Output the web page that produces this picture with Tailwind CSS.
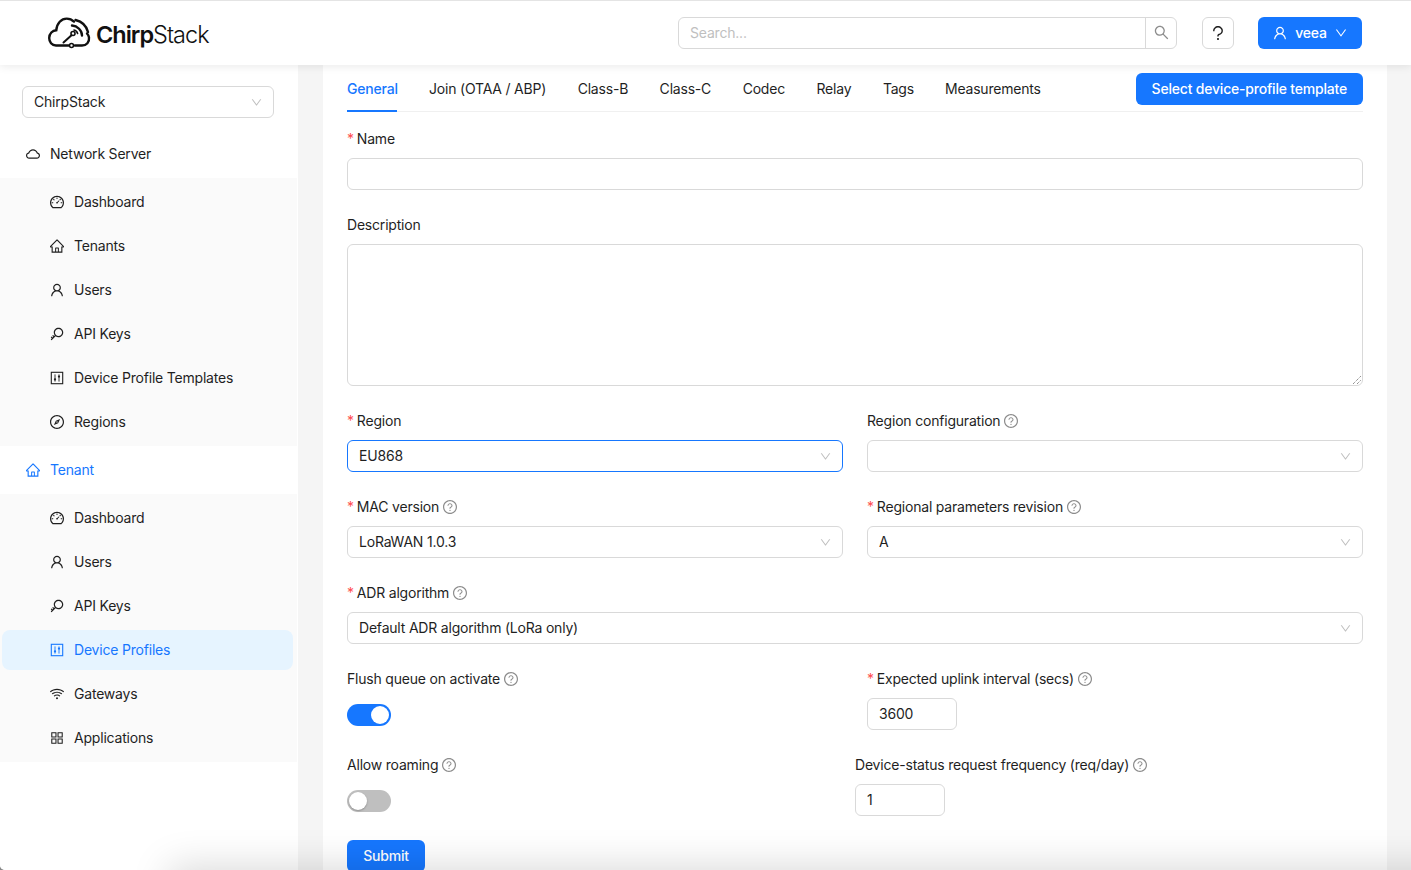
<!doctype html>
<html>
<head>
<meta charset="utf-8">
<script src="https://cdn.jsdelivr.net/npm/@tailwindcss/browser@4"></script>
<title>ChirpStack</title>
</head>
<body class="m-0 bg-[#888]">
<svg class="hidden" xmlns="http://www.w3.org/2000/svg">
<defs>
<symbol id="cloud" viewBox="64 64 896 896"><path fill="currentColor" d="M811.4 418.7C765.6 297.9 648.9 212 512.2 212S258.8 297.8 213 418.6C127.3 441.1 64 519.1 64 612c0 110.5 89.5 200 199.9 200h496.2C870.5 812 960 722.5 960 612c0-92.7-63.1-170.7-148.6-193.3zm36.3 281a123.07 123.07 0 0 1-87.6 36.3H263.9c-33.1 0-64.2-12.9-87.6-36.3A123.3 123.3 0 0 1 140 612c0-28 9.1-54.3 26.2-76.3a125.7 125.7 0 0 1 66.1-43.7l37.9-9.9 13.9-36.6c8.6-22.8 20.6-44.1 35.7-63.4a245.6 245.6 0 0 1 52.4-49.9c41.1-28.9 89.5-44.2 140-44.2s98.9 15.3 140 44.2c19.9 14 37.5 30.8 52.4 49.9 15.1 19.3 27.1 40.7 35.7 63.4l13.8 36.5 37.8 10c54.3 14.5 92.1 63.8 92.1 120 0 33.1-12.9 64.3-36.3 87.7z"/></symbol>
<symbol id="home" viewBox="64 64 896 896"><path fill="currentColor" d="M946.5 505L560.1 118.8l-25.9-25.9a31.5 31.5 0 0 0-44.4 0L77.5 505a63.9 63.9 0 0 0-18.8 46c.4 35.2 29.7 63.3 64.9 63.3h42.5V940h691.8V614.3h43.4c17.1 0 33.2-6.7 45.3-18.8a63.6 63.6 0 0 0 18.7-45.3c0-17-6.7-33.1-18.8-45.2zM568 868H456V664h112v204zm217.9-325.7V868H632V640c0-22.1-17.9-40-40-40H432c-22.1 0-40 17.9-40 40v228H238.1V542.3h-96l370-369.7 23.1 23.1L882 542.3h-96.1z"/></symbol>
<symbol id="user" viewBox="64 64 896 896"><path fill="currentColor" d="M858.5 763.6a374 374 0 0 0-80.6-119.5 375.63 375.63 0 0 0-119.5-80.6c-.4-.2-.8-.3-1.2-.5C719.5 518 760 444.7 760 362c0-137-111-248-248-248S264 225 264 362c0 82.7 40.5 156 102.8 201.1-.4.2-.8.3-1.2.5-44.8 18.9-85 46-119.5 80.6a375.63 375.63 0 0 0-80.6 119.5A371.7 371.7 0 0 0 136 901.8a8 8 0 0 0 8 8.2h60c4.4 0 7.9-3.5 8-7.8 2-77.2 33-149.5 87.8-204.3 56.7-56.7 132-87.9 212.2-87.9s155.5 31.2 212.2 87.9C779 752.7 810 825 812 902.2c.1 4.4 3.6 7.8 8 7.8h60a8 8 0 0 0 8-8.2c-1-47.8-10.9-94.3-29.5-138.2zM512 534c-45.9 0-89.1-17.9-121.6-50.4S340 407.9 340 362c0-45.9 17.9-89.1 50.4-121.6S466.1 190 512 190s89.1 17.9 121.6 50.4S684 316.1 684 362c0 45.9-17.9 89.1-50.4 121.6S557.9 534 512 534z"/></symbol>
<symbol id="down" viewBox="64 64 896 896"><path fill="currentColor" d="M884 256h-75c-5.1 0-9.9 2.5-12.9 6.6L512 654.2 227.9 262.6c-3-4.1-7.8-6.6-12.9-6.6h-75c-6.5 0-10.3 7.4-6.5 12.7l352.6 486.1c12.8 17.6 39 17.6 51.7 0l352.6-486.1c3.9-5.3.1-12.7-6.4-12.7z"/></symbol>
<symbol id="search" viewBox="64 64 896 896"><path fill="currentColor" d="M909.6 854.5L649.9 594.8C690.2 542.7 712 479 712 412c0-80.2-31.3-155.4-87.9-212.1-56.6-56.7-132-87.9-212.1-87.9s-155.5 31.3-212.1 87.9C143.2 256.5 112 331.8 112 412c0 80.1 31.3 155.5 87.9 212.1C256.5 680.8 331.8 712 412 712c67 0 130.6-21.8 182.7-62l259.7 259.6a8.2 8.2 0 0 0 11.6 0l43.6-43.5a8.2 8.2 0 0 0 0-11.6zM570.4 570.4C528 612.7 471.8 636 412 636s-116-23.3-158.4-65.6C211.3 528 188 471.8 188 412s23.3-116.1 65.6-158.4C296 211.3 352.2 188 412 188s116.1 23.2 158.4 65.6S636 352.2 636 412s-23.3 116.1-65.6 158.4z"/></symbol>
<symbol id="help" viewBox="64 64 896 896"><path fill="currentColor" d="M512 64C264.6 64 64 264.6 64 512s200.6 448 448 448 448-200.6 448-448S759.4 64 512 64zm0 820c-205.4 0-372-166.6-372-372s166.6-372 372-372 372 166.6 372 372-166.6 372-372 372z"/><path fill="currentColor" d="M623.6 316.7C593.6 290.4 554 276 512 276s-81.6 14.5-111.6 40.7C369.2 344 352 380.7 352 420v7.6c0 4.4 3.6 8 8 8h48c4.4 0 8-3.6 8-8V420c0-44.1 43.1-80 96-80s96 35.9 96 80c0 31.1-22 59.6-56.1 72.7-21.2 8.1-39.2 22.3-52.1 40.9-13.1 19-19.9 41.8-19.9 64.9V620c0 4.4 3.6 8 8 8h48c4.4 0 8-3.6 8-8v-22.7a48.3 48.3 0 0 1 30.9-44.8c59-22.7 97.1-74.7 97.1-132.5.1-39.3-17.1-76-48.3-103.3zM472 732a40 40 0 1 0 80 0 40 40 0 1 0-80 0z"/></symbol>
<symbol id="question" viewBox="64 64 896 896"><path fill="currentColor" d="M764 280.9c-14-30.6-33.9-58.1-59.3-81.6C653.1 151.4 584.6 125 512 125s-141.1 26.4-192.7 74.2c-25.4 23.6-45.3 51-59.3 81.7-14.6 32-22 65.9-22 100.9v27c0 6.2 5 11.2 11.2 11.2h54c6.2 0 11.2-5 11.2-11.2v-27c0-99.5 88.6-180.4 197.6-180.4s197.6 80.9 197.6 180.4c0 40.8-14.5 79.2-42 111.2-27.2 31.7-65.6 54.4-108.1 64-24.3 5.5-46.2 19.2-61.7 38.8a110.85 110.85 0 0 0-23.9 68.6v31.4c0 6.2 5 11.2 11.2 11.2h54c6.2 0 11.2-5 11.2-11.2v-31.4c0-15.7 10.9-29.5 26-32.9 58.4-13.2 111.4-44.7 149.3-88.7 19.1-22.3 34-47.1 44.3-74 10.7-27.9 16.1-57.2 16.1-87 0-35-7.4-69-22-100.9zM512 787c-30.9 0-56 25.1-56 56s25.1 56 56 56 56-25.1 56-56-25.1-56-56-56z"/></symbol>
<symbol id="dash" viewBox="64 64 896 896"><path fill="currentColor" d="M924.8 385.6a446.7 446.7 0 0 0-96-142.4 446.7 446.7 0 0 0-142.4-96C631.1 123.8 572.5 112 512 112s-119.1 11.8-174.4 35.2a446.7 446.7 0 0 0-142.4 96 446.7 446.7 0 0 0-96 142.4C75.8 440.9 64 499.5 64 560c0 132.7 58.3 257.7 159.9 343.1l1.7 1.4c5.8 4.8 13.1 7.5 20.6 7.5h531.7c7.5 0 14.8-2.7 20.6-7.5l1.7-1.4C901.7 817.7 960 692.7 960 560c0-60.5-11.9-119.1-35.2-174.4zM761.4 836H262.6A371.12 371.12 0 0 1 140 560c0-99.4 38.7-192.8 109-263 70.3-70.3 163.7-109 263-109 99.4 0 192.8 38.7 263 109 70.3 70.3 109 163.7 109 263 0 105.6-44.5 205.5-122.6 276zM623.5 421.5a8.03 8.03 0 0 0-11.3 0L527.7 506c-18.7-5-39.4-.2-54.1 14.5a55.95 55.95 0 0 0 0 79.2 55.95 55.95 0 0 0 79.2 0 55.87 55.87 0 0 0 14.5-54.1l84.5-84.5c3.1-3.1 3.1-8.2 0-11.3l-28.3-28.3zM490 320h44c4.4 0 8-3.6 8-8v-80c0-4.4-3.6-8-8-8h-44c-4.4 0-8 3.6-8 8v80c0 4.4 3.6 8 8 8zm260 218v44c0 4.4 3.6 8 8 8h80c4.4 0 8-3.6 8-8v-44c0-4.4-3.6-8-8-8h-80c-4.4 0-8 3.6-8 8zm12.7-197.2l-31.1-31.1a8.03 8.03 0 0 0-11.3 0l-56.6 56.6a8.03 8.03 0 0 0 0 11.3l31.1 31.1c3.1 3.1 8.2 3.1 11.3 0l56.6-56.6c3.1-3.1 3.1-8.2 0-11.3zm-458.6-31.1a8.03 8.03 0 0 0-11.3 0l-31.1 31.1a8.03 8.03 0 0 0 0 11.3l56.6 56.6c3.1 3.1 8.2 3.1 11.3 0l31.1-31.1c3.1-3.1 3.1-8.2 0-11.3l-56.6-56.6zM262 530h-80c-4.4 0-8 3.6-8 8v44c0 4.4 3.6 8 8 8h80c4.4 0 8-3.6 8-8v-44c0-4.4-3.6-8-8-8z"/></symbol>
<symbol id="key" viewBox="64 64 896 896"><path fill="currentColor" d="M608 112c-167.9 0-304 136.1-304 304 0 70.3 23.9 135 63.9 186.5l-41.1 41.1-62.3-62.3a8.15 8.15 0 0 0-11.4 0l-39.8 39.8a8.15 8.15 0 0 0 0 11.4l62.3 62.3-44.9 44.9-62.3-62.3a8.15 8.15 0 0 0-11.4 0l-39.8 39.8a8.15 8.15 0 0 0 0 11.4l62.3 62.3-65.3 65.3a8.03 8.03 0 0 0 0 11.3l42.3 42.3c3.1 3.1 8.2 3.1 11.3 0l253.6-253.6A304.06 304.06 0 0 0 608 720c167.9 0 304-136.1 304-304S775.9 112 608 112zm161.2 465.2C726.2 620.3 668.9 644 608 644c-60.9 0-118.2-23.7-161.2-66.8-43.1-43-66.8-100.3-66.8-161.2 0-60.9 23.7-118.2 66.8-161.2 43-43.1 100.3-66.8 161.2-66.8 60.9 0 118.2 23.7 161.2 66.8 43.1 43 66.8 100.3 66.8 161.2 0 60.9-23.7 118.2-66.8 161.2z"/></symbol>
<symbol id="control" viewBox="0 0 14 14"><rect x="1.3" y="1.3" width="11.4" height="11.4" fill="none" stroke="currentColor" stroke-width="1.1"/><path d="M5 3.4v7.2M9 3.4v7.2" fill="none" stroke="currentColor" stroke-width="0.9"/><circle cx="5" cy="8.4" r="1.15" fill="currentColor"/><circle cx="9" cy="5.6" r="1.15" fill="currentColor"/></symbol>
<symbol id="compass" viewBox="64 64 896 896"><path fill="currentColor" d="M512 64C264.6 64 64 264.6 64 512s200.6 448 448 448 448-200.6 448-448S759.4 64 512 64zm0 820c-205.4 0-372-166.6-372-372s166.6-372 372-372 372 166.6 372 372-166.6 372-372 372z"/><path fill="currentColor" fill-rule="evenodd" d="M710 314L585 585 314 710l125-271 271-125zM512 470a42 42 0 1 0 0 84 42 42 0 0 0 0-84z"/></symbol>
<symbol id="wifi" viewBox="64 64 896 896"><path fill="currentColor" d="M723 620.5C666.8 571.6 593.4 542 513 542s-153.8 29.6-210.1 78.6a8.1 8.1 0 0 0-.8 11.2l36 42.9c2.9 3.4 8 3.8 11.4.9C393.1 637.2 450.3 614 513 614s119.9 23.2 163.5 61.5c3.4 2.9 8.5 2.5 11.4-.9l36-42.9c2.8-3.3 2.4-8.3-.9-11.2zm117.4-140.1C751.7 406.5 637.6 362 513 362s-238.7 44.5-327.5 118.4a8.05 8.05 0 0 0-1 11.3l36 42.9c2.8 3.4 7.9 3.8 11.2 1C308 472.2 406.1 434 513 434s205 38.2 281.2 101.6c3.4 2.8 8.4 2.4 11.2-1l36-42.9c2.8-3.4 2.4-8.5-1-11.3zm116.7-139C835.7 241.8 680.3 182 511 182c-168.2 0-322.6 59-443.7 157.4a8 8 0 0 0-1.1 11.4l36 42.9c2.8 3.3 7.8 3.8 11.1 1.1C222 306.7 360.3 254 511 254c151.8 0 291 53.5 400 142.7 3.4 2.8 8.4 2.3 11.2-1.1l36-42.9c2.9-3.4 2.4-8.5-1.1-11.3zM448 778a64 64 0 1 0 128 0 64 64 0 1 0-128 0z"/></symbol>
<symbol id="apps" viewBox="64 64 896 896"><path fill="currentColor" d="M464 144H160c-8.8 0-16 7.2-16 16v304c0 8.8 7.2 16 16 16h304c8.8 0 16-7.2 16-16V160c0-8.8-7.2-16-16-16zm-52 268H212V212h200v200zm452-268H560c-8.8 0-16 7.2-16 16v304c0 8.8 7.2 16 16 16h304c8.8 0 16-7.2 16-16V160c0-8.8-7.2-16-16-16zm-52 268H612V212h200v200zM464 544H160c-8.8 0-16 7.2-16 16v304c0 8.8 7.2 16 16 16h304c8.8 0 16-7.2 16-16V560c0-8.8-7.2-16-16-16zm-52 268H212V612h200v200zm452-268H560c-8.8 0-16 7.2-16 16v304c0 8.8 7.2 16 16 16h304c8.8 0 16-7.2 16-16V560c0-8.8-7.2-16-16-16zm-52 268H612V612h200v200z"/></symbol>
</defs>
</svg>

<div class="relative w-[1411px] h-[870px] overflow-hidden rounded-bl-[5px] flex flex-col bg-[#f5f5f5] text-[14px] leading-[22px] tracking-[-0.2px] text-[#1f1f1f] font-['Inter','Liberation_Sans',sans-serif]">

  <header class="relative z-10 h-[65px] shrink-0 bg-white border-t border-[#e4e4e4] shadow-[0_2px_8px_rgba(0,0,0,0.08)] flex items-center pl-[48px] pr-[49px]">
    <div class="flex items-center gap-[5px]">
      <svg class="w-[43px] h-[32px]" viewBox="0 0 43 32" fill="none" stroke="#111" stroke-width="2.4" stroke-linecap="round">
        <path d="M20.5 28.5H8C3.8 28.5 1.2 25 1.2 21C1.2 16.5 4.5 13.5 8.3 13.2C8.8 6 13.5 1.6 18.7 1.6C21.7 1.6 24 2.6 26 4.6"/>
        <path d="M27 28.5H34C38.5 28.5 41.6 25 41 20.5C40.7 18.6 40 17.6 39 16.5"/>
        <path d="M15.5 25.5L23.5 18.2" stroke-width="2"/>
        <circle cx="25" cy="16.5" r="2" stroke-width="1.6"/>
        <circle cx="23.5" cy="28.5" r="2" stroke-width="1.6"/>
        <path d="M24 8.5C29.5 8.8 34 13.5 34 18.5"/>
        <path d="M27.5 3C33.5 4.5 38.5 9 40 15"/>
        <path d="M26 13C27.8 13.4 29.2 14.8 29.6 16.5" stroke-width="1.6"/>
      </svg>
      <div class="mt-[4px] text-[23.5px] leading-[32px] tracking-[-1px] text-[#111] whitespace-nowrap"><span class="font-semibold">Chirp</span><span class="font-light">Stack</span></div>
    </div>
    <div class="ml-auto flex items-center">
      <div class="w-[499px] h-[32px] flex border border-[#d9d9d9] rounded-md bg-white">
        <div class="flex-1 px-[11px] leading-[30px] text-[#bfbfbf]">Search...</div>
        <div class="w-[31px] border-l border-[#d9d9d9] flex items-center justify-center text-[#8c8c8c]"><svg class="w-[15px] h-[15px] -mt-[2px]"><use href="#search"/></svg></div>
      </div>
      <div class="ml-[25px] w-[32px] h-[32px] border border-[#d9d9d9] rounded-md flex items-center justify-center"><svg class="w-[16px] h-[16px]"><use href="#question"/></svg></div>
      <div class="ml-[24px] w-[104px] h-[32px] rounded-md bg-[#1677ff] text-white flex items-center justify-center font-medium">
        <svg class="w-[14px] h-[14px]"><use href="#user"/></svg>
        <span class="ml-[8px]">veea</span>
        <svg class="ml-[8px] w-[12px] h-[12px]"><use href="#down"/></svg>
      </div>
    </div>
  </header>

  <div class="flex flex-1 min-h-0">
    <aside class="w-[298px] shrink-0 bg-white">
      <div class="pt-[21px] pl-[22px] pr-[24px]">
        <div class="h-[32px] border border-[#d9d9d9] rounded-md px-[11px] flex items-center justify-between"><span>ChirpStack</span><svg class="w-[11px] h-[11px] text-[#bfbfbf]"><use href="#down"/></svg></div>
      </div>
      <div class="mt-[14px] w-[297px]">
        <div class="h-[44px] flex items-center pl-[26px]"><svg class="w-[14px] h-[14px]"><use href="#cloud"/></svg><span class="ml-[10px]">Network Server</span></div>
        <div class="bg-[#fafafa] mt-[2px] pb-[4px] pt-[4px]">
          <div class="h-[40px] mb-[4px] flex items-center pl-[50px]"><svg class="w-[14px] h-[14px]"><use href="#dash"/></svg><span class="ml-[10px]">Dashboard</span></div>
          <div class="h-[40px] mb-[4px] flex items-center pl-[50px]"><svg class="w-[14px] h-[14px]"><use href="#home"/></svg><span class="ml-[10px]">Tenants</span></div>
          <div class="h-[40px] mb-[4px] flex items-center pl-[50px]"><svg class="w-[14px] h-[14px]"><use href="#user"/></svg><span class="ml-[10px]">Users</span></div>
          <div class="h-[40px] mb-[4px] flex items-center pl-[50px]"><svg class="w-[14px] h-[14px]"><use href="#key"/></svg><span class="ml-[10px]">API Keys</span></div>
          <div class="h-[40px] mb-[4px] flex items-center pl-[50px]"><svg class="w-[14px] h-[14px]"><use href="#control"/></svg><span class="ml-[10px]">Device Profile Templates</span></div>
          <div class="h-[40px] flex items-center pl-[50px]"><svg class="w-[14px] h-[14px]"><use href="#compass"/></svg><span class="ml-[10px]">Regions</span></div>
        </div>
        <div class="h-[48px] flex items-center pl-[26px] text-[#1677ff]"><svg class="w-[14px] h-[14px]"><use href="#home"/></svg><span class="ml-[10px]">Tenant</span></div>
        <div class="bg-[#fafafa] pb-[4px] pt-[4px]">
          <div class="h-[40px] mb-[4px] flex items-center pl-[50px]"><svg class="w-[14px] h-[14px]"><use href="#dash"/></svg><span class="ml-[10px]">Dashboard</span></div>
          <div class="h-[40px] mb-[4px] flex items-center pl-[50px]"><svg class="w-[14px] h-[14px]"><use href="#user"/></svg><span class="ml-[10px]">Users</span></div>
          <div class="h-[40px] mb-[4px] flex items-center pl-[50px]"><svg class="w-[14px] h-[14px]"><use href="#key"/></svg><span class="ml-[10px]">API Keys</span></div>
          <div class="h-[40px] mb-[4px] ml-[2px] mr-[4px] flex items-center pl-[48px] bg-[#e6f4ff] rounded-lg text-[#1677ff]"><svg class="w-[14px] h-[14px]"><use href="#control"/></svg><span class="ml-[10px]">Device Profiles</span></div>
          <div class="h-[40px] mb-[4px] flex items-center pl-[50px]"><svg class="w-[14px] h-[14px]"><use href="#wifi"/></svg><span class="ml-[10px]">Gateways</span></div>
          <div class="h-[40px] flex items-center pl-[50px]"><svg class="w-[14px] h-[14px]"><use href="#apps"/></svg><span class="ml-[10px]">Applications</span></div>
        </div>
      </div>
    </aside>

    <main class="ml-[25px] w-[1064px] shrink-0 bg-white pl-[24px] pr-[24px] pt-[8px]">
      <div class="h-[39px] border-b border-[#f0f0f0] flex items-start relative">
        <div class="h-[39px] text-[#1677ff] font-medium border-b-2 border-[#1677ff] pt-[5px] w-[50px] whitespace-nowrap">General</div>
        <div class="ml-[32px] pt-[5px]">Join (OTAA / ABP)</div>
        <div class="ml-[31.5px] pt-[5px]">Class-B</div>
        <div class="ml-[31.5px] pt-[5px]">Class-C</div>
        <div class="ml-[31.5px] pt-[5px]">Codec</div>
        <div class="ml-[31.5px] pt-[5px]">Relay</div>
        <div class="ml-[31.5px] pt-[5px]">Tags</div>
        <div class="ml-[31px] pt-[5px]">Measurements</div>
        <div class="ml-auto h-[32px] px-[16px] rounded-md bg-[#1677ff] text-white font-medium flex items-center whitespace-nowrap">Select device-profile template</div>
      </div>

      <div class="pt-[16px]">
        <div class="h-[30px] flex items-start"><span class="text-[#ff4d4f] mr-[3px]">*</span><span>Name</span></div>
        <div class="h-[32px] border border-[#d9d9d9] rounded-md mb-[24px]"></div>

        <div class="h-[30px]">Description</div>
        <div class="relative h-[142px] border border-[#d9d9d9] rounded-md mb-[24px]">
          <svg class="absolute right-[1px] bottom-[1px] w-[8px] h-[8px]" viewBox="0 0 8 8" stroke="#666" stroke-width="1" stroke-dasharray="1 1"><path d="M0 8L8 0M4 8L8 4"/></svg>
        </div>

        <div class="grid grid-cols-2 gap-x-[24px]">
          <div>
            <div class="h-[30px]"><span class="text-[#ff4d4f] mr-[3px]">*</span>Region</div>
            <div class="h-[32px] border border-[#1677ff] rounded-md px-[11px] mb-[24px] flex items-center justify-between"><span>EU868</span><svg class="w-[11px] h-[11px] text-[#bfbfbf]"><use href="#down"/></svg></div>
          </div>
          <div>
            <div class="h-[30px] flex items-start">Region configuration<svg class="ml-[4px] mt-[4px] w-[14px] h-[14px] text-[#8c8c8c]"><use href="#help"/></svg></div>
            <div class="h-[32px] border border-[#d9d9d9] rounded-md px-[11px] mb-[24px] flex items-center justify-end"><svg class="w-[11px] h-[11px] text-[#bfbfbf]"><use href="#down"/></svg></div>
          </div>
          <div>
            <div class="h-[30px] flex items-start"><span class="text-[#ff4d4f] mr-[3px]">*</span>MAC version<svg class="ml-[4px] mt-[4px] w-[14px] h-[14px] text-[#8c8c8c]"><use href="#help"/></svg></div>
            <div class="h-[32px] border border-[#d9d9d9] rounded-md px-[11px] mb-[24px] flex items-center justify-between"><span>LoRaWAN 1.0.3</span><svg class="w-[11px] h-[11px] text-[#bfbfbf]"><use href="#down"/></svg></div>
          </div>
          <div>
            <div class="h-[30px] flex items-start"><span class="text-[#ff4d4f] mr-[3px]">*</span>Regional parameters revision<svg class="ml-[4px] mt-[4px] w-[14px] h-[14px] text-[#8c8c8c]"><use href="#help"/></svg></div>
            <div class="h-[32px] border border-[#d9d9d9] rounded-md px-[11px] mb-[24px] flex items-center justify-between"><span>A</span><svg class="w-[11px] h-[11px] text-[#bfbfbf]"><use href="#down"/></svg></div>
          </div>
        </div>

        <div class="h-[30px] flex items-start"><span class="text-[#ff4d4f] mr-[3px]">*</span>ADR algorithm<svg class="ml-[4px] mt-[4px] w-[14px] h-[14px] text-[#8c8c8c]"><use href="#help"/></svg></div>
        <div class="h-[32px] border border-[#d9d9d9] rounded-md px-[11px] mb-[24px] flex items-center justify-between"><span>Default ADR algorithm (LoRa only)</span><svg class="w-[11px] h-[11px] text-[#bfbfbf]"><use href="#down"/></svg></div>

        <div class="grid grid-cols-2 gap-x-[24px]">
          <div class="h-[86px]">
            <div class="h-[30px] flex items-start">Flush queue on activate<svg class="ml-[4px] mt-[4px] w-[14px] h-[14px] text-[#8c8c8c]"><use href="#help"/></svg></div>
            <div class="relative mt-[6px] w-[44px] h-[22px] rounded-full bg-[#1677ff]"><div class="absolute right-[2px] top-[2px] w-[18px] h-[18px] rounded-full bg-white"></div></div>
          </div>
          <div class="h-[86px]">
            <div class="h-[30px] flex items-start"><span class="text-[#ff4d4f] mr-[3px]">*</span>Expected uplink interval (secs)<svg class="ml-[4px] mt-[4px] w-[14px] h-[14px] text-[#8c8c8c]"><use href="#help"/></svg></div>
            <div class="w-[90px] h-[32px] border border-[#d9d9d9] rounded-md px-[11px] flex items-center">3600</div>
          </div>
          <div class="h-[86px]">
            <div class="h-[30px] flex items-start">Allow roaming<svg class="ml-[4px] mt-[4px] w-[14px] h-[14px] text-[#8c8c8c]"><use href="#help"/></svg></div>
            <div class="relative mt-[6px] w-[44px] h-[22px] rounded-full bg-[#bfbfbf]"><div class="absolute left-[2px] top-[2px] w-[18px] h-[18px] rounded-full bg-white shadow-[0_1px_2px_rgba(0,0,0,0.25)]"></div></div>
          </div>
          <div class="h-[86px] -ml-[12px]">
            <div class="h-[30px] flex items-start">Device-status request frequency (req/day)<svg class="ml-[4px] mt-[4px] w-[14px] h-[14px] text-[#8c8c8c]"><use href="#help"/></svg></div>
            <div class="w-[90px] h-[32px] border border-[#d9d9d9] rounded-md px-[11px] flex items-center">1</div>
          </div>
        </div>

        <div class="w-[78px] h-[32px] rounded-md bg-[#1677ff] text-white font-medium flex items-center justify-center">Submit</div>
      </div>
    </main>
  </div>

  <div class="absolute z-20 left-[185px] -right-[60px] top-[882px] h-[40px] shadow-[0_0_38px_16px_rgba(0,0,0,0.15)]"></div>
</div>
</body>
</html>
